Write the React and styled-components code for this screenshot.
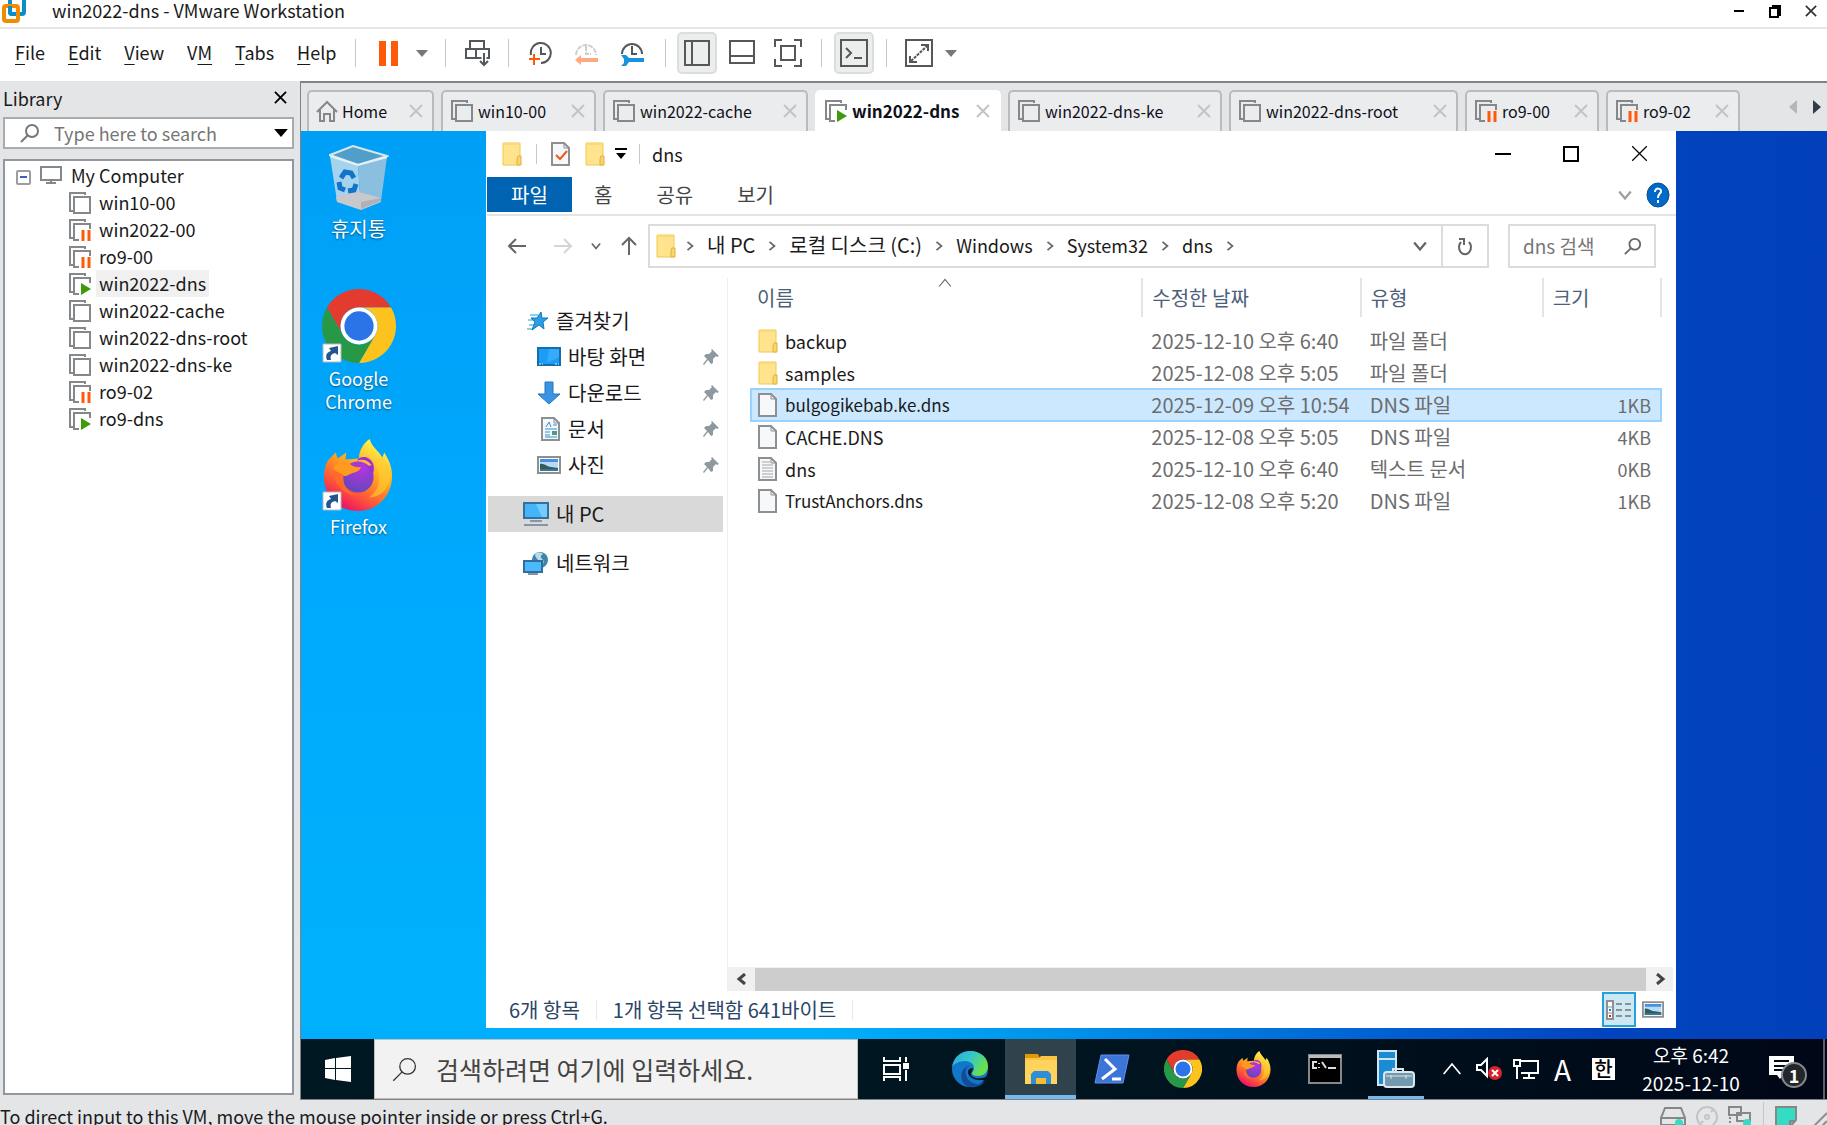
import React from "react";
import styled, { createGlobalStyle, css } from "styled-components";

const GlobalStyle = createGlobalStyle`
  * {
    box-sizing: border-box;
  }
  html, body {
    margin: 0;
    padding: 0;
  }
  body, button, input {
    font-family: "Noto Sans CJK KR", "Noto Sans", sans-serif;
    font-size: 18px;
    line-height: 24px;
    color: #1a1a1a;
  }
  button {
    border: 0;
    padding: 0;
    background: none;
  }
  input {
    border: 0;
    padding: 0;
    outline: none;
    background: none;
    min-width: 0;
  }
  svg {
    display: block;
    flex: none;
  }
  ul {
    list-style: none;
    margin: 0;
    padding: 0;
  }
`;

/* ---------- icons ---------- */

const VmwareLogo = () => (
  <svg width="26" height="24" viewBox="0 0 26 24" fill="none" strokeWidth="4">
    <rect x="10" y="-2" width="14" height="16" rx="2" stroke="#0b8fc9" />
    <rect x="4" y="6" width="14" height="15" rx="2" stroke="#f38b00" />
    <path d="M10 6v6a2 2 0 0 0 2 2h4" stroke="#0b8fc9" />
  </svg>
);

const VmIcon = ({ state }) => (
  <svg width="24" height="24" viewBox="0 0 24 24" fill="none" stroke="#85888b" strokeWidth="2">
    <path d="M17 4V2H2v18h3" />
    {!state && <rect x="6" y="6" width="16" height="16" />}
    {state && <path d="M11 22H6V6h16v5" />}
    {state === "paused" && (
      <path d="M15 12v11M21 12v11" stroke="#ff5a0a" strokeWidth="3" />
    )}
    {state === "running" && <path d="M13 11l10 6-10 6z" fill="#3d9a0b" stroke="none" />}
  </svg>
);

const HomeIcon = () => (
  <svg width="22" height="22" viewBox="0 0 22 22" fill="none" stroke="#85888b" strokeWidth="2">
    <path d="M1 12L11 2l10 10M4 10v11h4v-7h6v7h4V10" />
  </svg>
);

const Cross = ({ size = 14, color = "#c2c4c6", stroke = 2 }) => (
  <svg width={size} height={size} viewBox="0 0 14 14" stroke={color} strokeWidth={stroke}>
    <path d="M1 1l12 12M13 1L1 13" />
  </svg>
);

const Caret = ({ width = 12, height = 7, color = "#76797c" }) => (
  <svg width={width} height={height} viewBox="0 0 12 7" fill={color}>
    <path d="M0 0h12L6 7z" />
  </svg>
);

const Chevron = ({ turn = 0, size = 12, color = "#666", stroke = 2 }) => (
  <svg width={size} height={size} viewBox="0 0 12 12" fill="none" stroke={color} strokeWidth={stroke}>
    <path d="M1 3l5 6 5-6" transform={`rotate(${turn} 6 6)`} />
  </svg>
);

const Magnifier = ({ size = 20, color = "#777", stroke = 2 }) => (
  <svg width={size} height={size} viewBox="0 0 20 20" fill="none" stroke={color} strokeWidth={stroke}>
    <circle cx="12" cy="8" r="6" />
    <path d="M8 12l-7 7" />
  </svg>
);

const Monitor = () => (
  <svg width="22" height="20" viewBox="0 0 22 20" fill="none" stroke="#85888b" strokeWidth="2">
    <rect x="1" y="2" width="20" height="13" />
    <path d="M11 15v3M6 18h10" />
  </svg>
);

const SendKeysIcon = () => (
  <svg width="26" height="28" viewBox="0 0 26 28" fill="none" stroke="#55585a" strokeWidth="2">
    <rect x="6" y="2" width="14" height="8" />
    <path d="M2 10h23v9H2zM12 10v9" />
    <path d="M20 16v10M16 22l4 4 4-4" stroke="#fff" strokeWidth="5" />
    <path d="M20 14v12M16 22l4 4 4-4" />
  </svg>
);

const ClockIcon = ({ kind }) => (
  <svg width="24" height="26" viewBox="0 0 24 26" fill="none" stroke={kind === "revert" ? "#cfcfcf" : "#55585a"} strokeWidth="2">
    {kind === "take" && <path d="M3 15A10 10 0 1 1 13 23M13 7v7h5" />}
    {kind === "revert" && <path d="M2 15A10 10 0 1 1 22 15M12 6v8h5" strokeDasharray="5 1" />}
    {kind === "manage" && <path d="M2 14A10 10 0 1 1 22 14M12 6v8h5" />}
    {kind === "take" && <path d="M1 19h11M6 14v11" stroke="#ff5a0a" />}
    {kind === "revert" && <path d="M1 20l6-5v3h17v4H7v3z" fill="#ffa983" stroke="none" />}
    {kind === "manage" && (
      <path d="M1 15h5l3 3h15v4H9l-3 4H1l3-3v-4z" fill="#1793dd" stroke="none" />
    )}
  </svg>
);

const PanelIcon = ({ kind }) => (
  <svg width="28" height="28" viewBox="0 0 28 28" fill="none" stroke="#55585a" strokeWidth="2">
    {kind === "left" && <path d="M2 2h24v24H2zM9 2v24" />}
    {kind === "bottom" && <path d="M2 2h24v22H2zM2 17h24" />}
    {kind === "full" && <path d="M1 8V1h7M20 1h7v7M27 20v7h-7M8 27H1v-7M7 7h14v14H7z" />}
    {kind === "console" && <path d="M1 1h26v26H1zM6 9l5 5-5 5M14 19h8" />}
    {kind === "expand" && (
      <>
        <path d="M1 1h26v26H1zM16 6h7v6M5 17v6h7" />
        <path d="M6 22L22 7" strokeDasharray="3 1" />
      </>
    )}
  </svg>
);

const Folder = () => (
  <svg width="20" height="24" viewBox="0 0 20 24">
    <path d="M1 1h17v22H1z" fill="#ffe48d" stroke="#f0c850" />
    <path d="M1 1h17v2H1z" fill="#fbd976" />
    <path d="M16 14h3v9h-4v-6z" fill="#fbd56a" stroke="#dfb23e" />
  </svg>
);

const Page = ({ kind }) => (
  <svg width="20" height="24" viewBox="0 0 20 24" fill="none">
    <path d="M1 1h12l5 5v17H1z" fill="#f6f8f9" stroke="#8d9092" strokeWidth="2" />
    <path d="M13 1v5h5" stroke="#8d9092" />
    {kind === "check" && <path d="M5 13l4 4 7-8" stroke="#f0561d" strokeWidth="2" />}
    {kind === "text" && (
      <path d="M4 5h8M4 8h11M4 11h11M4 14h11M4 17h11M4 20h11" stroke="#a3a6a8" />
    )}
    {kind === "doc" && (
      <>
        <path d="M5 10l3-5 2 5M12 8h4M4 12h12M4 15h5M4 18h5M4 20h12" stroke="#2f8fd3" />
        <path d="M11 14h5v4h-5z" fill="#4b9b86" />
      </>
    )}
  </svg>
);

const Picture = ({ width = 24, height = 18 }) => (
  <svg width={width} height={height} viewBox="0 0 24 18">
    <rect x="1" y="1" width="22" height="16" fill="#fff" stroke="#8d9092" strokeWidth="2" />
    <path d="M3 3h18v12H3z" fill="#b4dcf8" />
    <path d="M3 3h18v3H3z" fill="#4a90dd" />
    <path d="M3 8c4-1 7 3 11 3l7 1v3H3z" fill="#2f5e57" />
    <path d="M3 13h18v2H3z" fill="#41719c" />
  </svg>
);

const StarIcon = () => (
  <svg width="22" height="20" viewBox="0 0 22 20">
    <path d="M3 4h8M1 9h6M2 14h6M0 18h6" stroke="#8fcdf3" strokeWidth="2" />
    <path d="M14 1l1 6h6l-5 4 1 7-5-4-7 5 3-8-4-4h6z" fill="#2a9fe3" stroke="#1577b8" />
  </svg>
);

const DesktopIcon = () => (
  <svg width="24" height="20" viewBox="0 0 24 20">
    <path d="M1 1h22v17H1z" fill="#1b9df5" stroke="#116fae" strokeWidth="2" />
    <path d="M12 2h10v8l-12 6z" fill="#35abf9" />
    <path d="M2 17h4M18 17h4" stroke="#d5edfb" strokeDasharray="2 1" />
  </svg>
);

const DownArrow = () => (
  <svg width="24" height="24" viewBox="0 0 24 24">
    <path d="M8 1h8v12h7L12 23 1 13h7z" fill="#3a94e4" stroke="#2473bb" />
  </svg>
);

const PcIcon = () => (
  <svg width="26" height="24" viewBox="0 0 26 24">
    <path d="M1 1h24v15H1z" fill="#45b5f9" stroke="#376f9b" strokeWidth="2" />
    <path d="M13 2h11v13h-5z" fill="#74cbff" />
    <path d="M7 19h12M1 23h24" stroke="#8296a8" strokeWidth="2" />
  </svg>
);

const NetworkIcon = () => (
  <svg width="26" height="24" viewBox="0 0 26 24">
    <circle cx="17" cy="9" r="8" fill="#3f85ab" />
    <path d="M12 3c2-2 6-2 8 0-2 1-3 3-1 5 2 1 2 3 1 5-3-2-8-6-8-10z" fill="#b5dde9" />
    <path d="M1 10h18v11H1z" fill="#4bb9fb" stroke="#2d6f9e" strokeWidth="2" />
    <path d="M5 23h10" stroke="#8296a8" strokeWidth="2" />
  </svg>
);

const Pin = () => (
  <svg width="16" height="16" viewBox="0 0 16 16" fill="#8e999f">
    <path d="M9 0l7 7-2 1-1-1-3 3 0 4-2 1-3-4-4 5-1-1 4-5-3-3 2-2h3l3-3-1-1z" />
  </svg>
);

const Arrow = ({ turn = 0, color = "#666" }) => (
  <svg width="20" height="20" viewBox="0 0 20 20" fill="none" stroke={color} strokeWidth="2">
    <path d="M19 10H2M9 3l-7 7 7 7" transform={`rotate(${turn} 10 10)`} />
  </svg>
);

const Refresh = () => (
  <svg width="16" height="20" viewBox="0 0 16 20" fill="none" stroke="#666" strokeWidth="2">
    <path d="M12 6a6 7 0 1 1-8 0M2 3h5v6" />
  </svg>
);

const Help = () => (
  <svg width="24" height="26" viewBox="0 0 24 26">
    <ellipse cx="12" cy="13" rx="11" ry="12" fill="#0068c9" stroke="#0a4f91" />
    <path d="M9 10c0-5 7-4 6 0-1 2-3 2-3 6M12 18v3" fill="none" stroke="#fff" strokeWidth="2" />
  </svg>
);

const RecycleBin = () => (
  <svg width="60" height="66" viewBox="0 0 60 66">
    <path d="M1 10L24 1l34 10-29 9z" fill="#4f9fc8" stroke="#d7e6ee" strokeWidth="2" />
    <path d="M1 11l28 9 3 44-24-8z" fill="#a4d3ee" />
    <path d="M58 12L29 20l3 44 20-8z" fill="#8abfe0" />
    <path d="M7 52l19-6 26 7v4l-20 8-24-8z" fill="#c8c9cc" />
    <path d="M32 64l20-8v-3l-20 4z" fill="#aeb2b8" />
    <path d="M1 11l28 9 29-8" fill="none" stroke="#e5f1f7" strokeWidth="2" />
    <g fill="none" stroke="#1173c9" strokeWidth="5">
      <path d="M12 33l4-6 6 1 3 5" />
      <path d="M10 37l1 6 5 2" />
      <path d="M19 46l6-1 2-6" />
    </g>
  </svg>
);

const Chrome = ({ size }) => (
  <svg width={size} height={size} viewBox="0 0 48 48">
    <path d="M24 12H44.800A24 24 0 0 0 3.200 12L13.600 30A12 12 0 0 1 24 12z" fill="#e33b2e" />
    <path d="M24 12H44.800A24 24 0 0 1 24 48L34.400 30A12 12 0 0 0 24 12z" fill="#fcc31e" />
    <path d="M3.200 12A24 24 0 0 0 24 48L34.400 30A12 12 0 0 1 13.600 30z" fill="#279847" />
    <circle cx="24" cy="24" r="12" fill="#fff" />
    <circle cx="24" cy="24" r="9.500" fill="#2b74e8" />
  </svg>
);

const Firefox = ({ size }) => (
  <svg width={size} height={size} viewBox="0 0 72 74">
    <defs>
      <linearGradient id="fxBody" x1="0.800" y1="0.100" x2="0.300" y2="1">
        <stop offset="0" stopColor="#fff04a" />
        <stop offset="0.400" stopColor="#ffa31f" />
        <stop offset="0.700" stopColor="#ff5a36" />
        <stop offset="1" stopColor="#ea0b6c" />
      </linearGradient>
      <radialGradient id="fxGlobe" cx="0.600" cy="0.200" r="0.900">
        <stop offset="0" stopColor="#b833e1" />
        <stop offset="1" stopColor="#5a49b8" />
      </radialGradient>
    </defs>
    <path d="M4 22l8-8 2 6 9-6-1 7 14-1c0-9 5-16 11-20 2 8 9 12 13 19l2-5c5 8 8 15 8 24 0 20-15 36-35 36S0 59 0 39c0-6 1-12 4-17z" fill="url(#fxBody)" />
    <path d="M50 24c10 10 9 29-4 36 14 0 22-11 22-23 0-9-5-15-10-20 2 6-1 9-8 7z" fill="#ffcf33" opacity="0.600" />
    <circle cx="35" cy="39" r="16" fill="url(#fxGlobe)" />
    <path d="M34 22c6-2 12 0 15 5l-5 1c3 2 5 5 6 9 3-8 1-15-6-18-4-1-8 0-10 3z" fill="#9a2fd8" />
    <path d="M9 31c4-7 10-10 16-8 3 5 7 6 13 6-2 6-9 5-15 9-6 0-10-3-14-7z" fill="#ff9a20" />
    <path d="M9 31c1 16 11 26 25 27-10-3-15-10-14-21z" fill="#ff6a2c" />
  </svg>
);

const Shortcut = () => (
  <svg width="20" height="20" viewBox="0 0 20 20">
    <path d="M1 1h18v18H1z" fill="#fff" stroke="#b7b9bb" />
    <path d="M5 17c-2-5 0-8 4-9L7 5l9-2v9l-3-2c-4 1-5 3-4 7z" fill="#24558f" />
  </svg>
);

const WindowsLogo = () => (
  <svg width="26" height="26" viewBox="0 0 26 26" fill="#fff">
    <path d="M0 4l10-2v10H0zM11 2l15-2v12H11zM0 13h10v11L0 22zM11 13h15v13l-15-2z" />
  </svg>
);

const TaskView = () => (
  <svg width="26" height="24" viewBox="0 0 26 24" fill="none" stroke="#fff" strokeWidth="2">
    <path d="M1 0v4h16V0M1 8h16v9H1zM1 24v-4h16v4M23 0v5M23 13v11" />
    <path d="M21 7h4v4h-4z" fill="#fff" />
  </svg>
);

const Edge = () => (
  <svg width="38" height="38" viewBox="0 0 38 38">
    <defs>
      <linearGradient id="edgeTop" x1="0" y1="0" x2="1" y2="0.500">
        <stop offset="0" stopColor="#27a8ec" />
        <stop offset="0.500" stopColor="#35c6c9" />
        <stop offset="1" stopColor="#6be04b" />
      </linearGradient>
    </defs>
    <circle cx="19" cy="19" r="18" fill="#1277cb" />
    <path d="M1 17C3 6 11 1 19 1c11 0 18 7 18 15 0 7-5 10-10 10-4 0-6-1-6-3 0-1 2-2 2-5 0-4-4-7-9-7-6 0-11 3-13 6z" fill="url(#edgeTop)" />
    <path d="M15 19c-2 8 4 15 12 15 3 0 6-2 8-4-4 6-10 8-17 7-7-2-9-10-7-15 1-3 4-6 8-6-2 1-4 2-4 3z" fill="#124c94" />
    <path d="M22 18c0 3-2 4-2 6 0 3 5 5 10 4 3 0 5-1 7-3l1 6-7-1c-7 1-14-3-14-8 0-3 3-4 5-4z" fill="#001620" />
  </svg>
);

const ExplorerIcon = () => (
  <svg width="34" height="32" viewBox="0 0 34 32">
    <path d="M1 1h13l2 4H1z" fill="#e09a08" />
    <path d="M1 5h32v26H1z" fill="#ffd35e" />
    <path d="M1 5h14l2-2h16v4H1z" fill="#fbc542" />
    <path d="M7 31V21l3-3h14l3 3v10h-5v-6H12v6z" fill="#2e8fd6" />
    <path d="M12 25h10v6H12z" fill="#f5bc36" />
  </svg>
);

const PowerShell = () => (
  <svg width="36" height="30" viewBox="0 0 36 30">
    <path d="M7 1h28l-6 28H1z" fill="#3d74d8" stroke="#5d90ea" />
    <path d="M11 5l10 10L8 25M18 25h9" fill="none" stroke="#fff" strokeWidth="3" />
  </svg>
);

const CmdIcon = () => (
  <svg width="34" height="30" viewBox="0 0 34 30">
    <path d="M1 1h32v28H1z" fill="#000" stroke="#85898c" strokeWidth="2" />
    <path d="M1 1h32v3H1z" fill="#b9bdc0" />
    <path d="M9 8H5v6h4M11 9v1M11 13v1M14 8l4 6M20 14h8" fill="none" stroke="#ddd" strokeWidth="2" />
  </svg>
);

const ServerManager = () => (
  <svg width="38" height="38" viewBox="0 0 38 38">
    <path d="M1 1h18v34H1z" fill="#1b8bd4" stroke="#cfe6f5" strokeWidth="2" />
    <path d="M2 9h16" stroke="#cfe6f5" strokeWidth="2" />
    <path d="M16 21v-2h10v2" fill="none" stroke="#dbe7ee" strokeWidth="2" />
    <rect x="7" y="22" width="30" height="15" rx="3" fill="#7299ad" stroke="#dbe7ee" strokeWidth="2" />
    <path d="M9 26h26M14 25v4M29 25v4" stroke="#dbe7ee" strokeWidth="1" />
  </svg>
);

const Speaker = () => (
  <svg width="26" height="24" viewBox="0 0 26 24" fill="none" stroke="#fff" strokeWidth="2">
    <path d="M1 8h4l6-6v17l-6-6H1z" />
    <circle cx="19" cy="16" r="7" fill="#d8232c" stroke="none" />
    <path d="M16 13l6 6M22 13l-6 6" />
  </svg>
);

const WiredIcon = () => (
  <svg width="26" height="22" viewBox="0 0 26 22" fill="none" stroke="#fff" strokeWidth="2">
    <path d="M8 3h17v12H8M16 15v5M10 20h12M1 2h6v6H1zM4 8v13" />
  </svg>
);

const Notification = () => (
  <svg width="26" height="26" viewBox="0 0 26 26">
    <path d="M0 0h25v19H14l-3 4-3-4H0z" fill="#fff" />
    <path d="M5 5h15M5 10h15M5 14h12" stroke="#000c18" strokeWidth="2" />
  </svg>
);

const DiskIcon = () => (
  <svg width="26" height="22" viewBox="0 0 26 22" fill="none" stroke="#85888b" strokeWidth="2">
    <path d="M1 20v-7L5 3h16l4 10v7zM1 13h24" />
    <circle cx="19" cy="18" r="4" fill="#35dcc4" stroke="none" />
  </svg>
);

const DiscIcon = () => (
  <svg width="22" height="22" viewBox="0 0 22 22" fill="none" stroke="#c2c5c7" strokeWidth="2">
    <circle cx="11" cy="12" r="10" />
    <circle cx="11" cy="12" r="2" />
    <path d="M15 7l2-2M5 18l2-2" />
  </svg>
);

const AdapterIcon = () => (
  <svg width="24" height="22" viewBox="0 0 24 22" fill="none" stroke="#85888b" strokeWidth="2">
    <path d="M1 2h12v8H1zM9 8h13v8H9z" fill="#e4e5e7" />
    <path d="M2 12v10" strokeDasharray="2 2" />
    <circle cx="19" cy="18" r="4" fill="#35dcc4" stroke="none" />
  </svg>
);

const NoteIcon = () => (
  <svg width="22" height="22" viewBox="0 0 22 22">
    <path d="M1 2h20v13l-6 7H1z" fill="#35dcc4" stroke="#85888b" strokeWidth="2" />
    <path d="M15 22v-6h6" fill="none" stroke="#85888b" strokeWidth="2" />
  </svg>
);

/* ---------- VMware frame ---------- */

const Frame = styled.div`
  display: flex;
  flex-direction: column;
  height: 100vh;
  overflow: hidden;
  background: #e4e5e7;
`;

const TitleBar = styled.header`
  display: flex;
  align-items: flex-start;
  gap: 26px;
  height: 29px;
  background: #fff;
  border-bottom: 2px solid #e6e6e6;
  white-space: nowrap;
`;

const TitleText = styled.span`
  flex: 1;
  line-height: 20px;
`;

const TitleButtons = styled.div`
  display: flex;
  align-items: center;
  gap: 24px;
  height: 22px;
  padding-right: 10px;
`;

const MenuBar = styled.nav`
  display: flex;
  align-items: center;
  height: 52px;
  padding: 0 0 4px 15px;
  background: #fff;
`;

const Menus = styled.div`
  display: flex;
  gap: 23px;
  padding: 0 15px 2px 0;
`;

const MenuButton = styled.button`
  white-space: nowrap;

  u {
    text-underline-offset: 4px;
  }
`;

const Separator = styled.span`
  width: 1px;
  height: ${(p) => p.$height || 28}px;
  margin: 0 ${(p) => p.$gap || 12}px;
  background: ${(p) => (p.$light ? "#e8e8e8" : "#c4c6c8")};
  flex: none;
`;

const Spacer = styled.span`
  width: ${(p) => p.$width}px;
  flex: none;
`;

const ToolButton = styled.button`
  display: flex;
  align-items: center;
  justify-content: center;
  width: ${(p) => p.$width || 46}px;
  height: 42px;
  border-radius: 5px;
  ${(p) =>
    p.$pressed &&
    css`
      background: #eceded;
      border: 2px solid #dcdddf;
    `}
`;

const PauseGlyph = styled.span`
  width: 19px;
  height: 25px;
  border: solid #ff5a0a;
  border-width: 0 7px;
`;

const Workspace = styled.div`
  display: flex;
  flex: 1;
  min-height: 0;
`;

const Library = styled.aside`
  display: flex;
  flex-direction: column;
  width: 300px;
  padding: 0 6px 5px 3px;
  flex: none;
`;

const LibraryHead = styled.div`
  display: flex;
  align-items: center;
  justify-content: space-between;
  height: 36px;
  padding: 0 7px 3px 0;
`;

const LibrarySearch = styled.label`
  display: flex;
  align-items: center;
  gap: 14px;
  height: 32px;
  padding: 0 4px 0 15px;
  background: #fff;
  border: 2px solid #a9acaf;

  input {
    flex: 1;
  }
  input::placeholder {
    color: #767676;
    opacity: 1;
  }
`;

const Tree = styled.div`
  flex: 1;
  margin-top: 10px;
  padding-left: 11px;
  background: #fff;
  border: 2px solid #9097a0;
`;

const TreeRoot = styled.div`
  display: flex;
  align-items: center;
  height: 28px;
  gap: 9px;
`;

const Expander = styled.button`
  width: 15px;
  height: 15px;
  border: 2px solid #9b9da0;
  border-radius: 2px;
  display: flex;
  align-items: center;
  justify-content: center;
  margin-top: 4px;

  &::before {
    content: "";
    width: 7px;
    height: 2px;
    background: #3f5ec2;
  }
`;

const TreeItem = styled.li`
  display: flex;
  align-items: center;
  gap: 4px;
  height: 27px;
  padding-left: 52px;
`;

const TreeLabel = styled.span`
  line-height: 27px;
  padding: 0 3px;
  background: ${(p) => (p.$active ? "#f0f0f0" : "transparent")};
`;

const Stage = styled.main`
  display: flex;
  flex-direction: column;
  flex: 1;
  min-width: 0;
  border: solid #808285;
  border-width: 2px 0 1px 1px;
`;

const TabStrip = styled.div`
  display: flex;
  align-items: flex-end;
  gap: 7px;
  height: 48px;
  padding: 0 6px;
  flex: none;
`;

const Tab = styled.button`
  display: flex;
  align-items: center;
  gap: 4px;
  width: ${(p) => p.$width}px;
  height: 41px;
  padding: 0 9px 2px 7px;
  background: ${(p) => (p.$active ? "#fff" : "#ebecee")};
  border: 2px solid ${(p) => (p.$active ? "#fff" : "#b9bbbe")};
  border-bottom: 0;
  border-radius: 5px 5px 0 0;
  white-space: nowrap;

  span {
    flex: 1;
    text-align: left;
    font-size: ${(p) => (p.$active ? 17 : 16)}px;
    font-weight: ${(p) => (p.$active ? 700 : 400)};
    color: #10101a;
  }
`;

const TabArrows = styled.div`
  display: flex;
  gap: 16px;
  align-items: center;
  align-self: stretch;
  margin-left: auto;
`;

const StatusBar = styled.footer`
  display: flex;
  align-items: center;
  justify-content: space-between;
  height: 25px;
  padding-top: 7px;
  overflow: hidden;
  white-space: nowrap;
`;

const StatusIcons = styled.div`
  display: flex;
  align-items: center;
  gap: 10px;
`;

/* ---------- guest desktop ---------- */

const Desktop = styled.div`
  display: flex;
  flex: 1;
  min-height: 0;
  padding: 0 151px 11px 0;
  background: linear-gradient(90deg, #00aeff 0%, #00b0fb 34%, #0092ea 50%, #0063d3 70%, #0244bf 85%, #0140ba 100%);
`;

const DesktopIcons = styled.div`
  display: flex;
  flex-direction: column;
  width: 185px;
  padding: 14px 70px 0 0;
  flex: none;
  background: linear-gradient(180deg, #009ff6 0%, #00a9fd 50%, #00b2fb 100%);
`;

const DesktopItem = styled.button`
  display: flex;
  flex-direction: column;
  align-items: center;
  gap: ${(p) => p.$gap || 4}px;
  margin-bottom: ${(p) => p.$after || 0}px;
  color: #fff;
  font-size: ${(p) => p.$size || 18}px;
  line-height: 23px;
  text-shadow: 0 1px 2px rgba(0, 0, 0, 0.5);
`;

const Art = styled.span`
  position: relative;
  width: 74px;
  display: flex;
  justify-content: center;
`;

const Badge = styled.span`
  position: absolute;
  left: 0;
  bottom: 0;
`;

const Explorer = styled.section`
  display: flex;
  flex-direction: column;
  flex: 1;
  min-width: 0;
  padding-left: 1px;
  background: #fff;
`;

const Caption = styled.div`
  display: flex;
  align-items: center;
  height: 47px;
  padding: 0 28px 2px 15px;
`;

const CaptionButtons = styled.div`
  display: flex;
  align-items: center;
  gap: ${(p) => p.$gap}px;
  margin-left: auto;
`;

const Ribbon = styled.div`
  display: flex;
  align-items: center;
  height: 38px;
  padding: 0 6px 3px 0;
  border-bottom: 2px solid #e3e4e6;
`;

const RibbonTab = styled.button`
  height: 35px;
  padding: 0 22px;
  font-size: 20px;
  color: ${(p) => (p.$file ? "#fff" : "#444")};
  background: ${(p) => (p.$file ? "#0063b1" : "transparent")};
  width: ${(p) => (p.$file ? "85px" : "auto")};
`;

const AddressRow = styled.div`
  display: flex;
  align-items: center;
  height: 62px;
  padding: 0 20px 2px;
`;

const NavButtons = styled.div`
  display: flex;
  align-items: center;
  gap: 18px;
  width: 141px;

  button:nth-child(1) {
    margin-right: 8px;
  }
`;

const PathBox = styled.div`
  display: flex;
  align-items: center;
  flex: 1;
  min-width: 0;
  height: 44px;
  padding-left: 6px;
  border: 2px solid #dcdcdc;
`;

const Crumb = styled.button`
  margin: 0 12px;
  padding-bottom: 2px;
  font-size: ${(p) => (p.$hangul ? 20 : 18)}px;
  white-space: nowrap;
`;

const PathEnd = styled.div`
  display: flex;
  align-items: center;
  align-self: stretch;
  margin-left: auto;
`;

const RefreshButton = styled.button`
  display: flex;
  align-items: center;
  justify-content: center;
  align-self: stretch;
  width: 46px;
  margin-left: 14px;
  border-left: 2px solid #dcdcdc;
`;

const FileSearch = styled.label`
  display: flex;
  align-items: center;
  width: 148px;
  height: 44px;
  margin-left: 19px;
  padding: 0 12px 0 13px;
  border: 2px solid #dcdcdc;

  input {
    flex: 1;
    font-size: 19px;
  }
  input::placeholder {
    color: #767676;
    opacity: 1;
  }
`;

const Panes = styled.div`
  display: flex;
  flex: 1;
  min-height: 0;
`;

const Sidebar = styled.ul`
  display: flex;
  flex-direction: column;
  width: 241px;
  padding: 25px 4px 0 1px;
  border-right: 1px solid #eeeeee;
`;

const SideItem = styled.li`
  display: flex;
  align-items: center;
  gap: 7px;
  height: 36px;
  padding: 0 4px 0 ${(p) => (p.$nested ? 47 : 35)}px;
  margin-top: ${(p) => (p.$apart ? 13 : 0)}px;
  font-size: 20px;
  background: ${(p) => (p.$active ? "#d9d9d9" : "transparent")};

  svg:last-child {
    margin-left: auto;
  }
`;

const SideIcon = styled.span`
  display: flex;
  justify-content: center;
  width: 26px;
`;

const Listing = styled.div`
  display: flex;
  flex-direction: column;
  flex: 1;
  min-width: 0;
  padding-right: 3px;
`;

const ListingBody = styled.div`
  flex: 1;
  padding: 0 11px 0 23px;
`;

const FileTable = styled.table`
  width: 100%;
  table-layout: fixed;
  border-collapse: collapse;
  color: #6d6d6d;
  font-size: 20px;
`;

const HeadCell = styled.th`
  position: relative;
  width: ${(p) => p.$width};
  height: 39px;
  padding: 0 0 0 ${(p) => (p.$first ? 6 : 9)}px;
  border-right: 2px solid #e5e5e5;
  text-align: left;
  font-weight: 400;
  color: #4c607a;
`;

const SortMark = styled.span`
  position: absolute;
  left: 48%;
  top: -2px;
`;

const SpacerRow = styled.tr`
  height: 8px;
`;

const FileRow = styled.tr`
  height: 32px;
  ${(p) =>
    p.$selected &&
    css`
      background: #cce8ff;
      outline: 2px solid #99d1ff;
      outline-offset: -1px;
    `}

  td {
    padding: 0 0 0 9px;
    white-space: nowrap;
  }
  td:first-child {
    padding-left: 7px;
  }
  td:last-child {
    padding-right: 10px;
    text-align: right;
    font-size: 18px;
  }
`;

const FileName = styled.div`
  display: flex;
  align-items: center;
  gap: 7px;
  font-size: ${(p) => (p.$long ? 17 : 18)}px;
  color: #1a1a1a;
`;

const ScrollTrack = styled.div`
  display: flex;
  align-items: center;
  height: 24px;
  background: #f0f0f0;
`;

const ScrollButton = styled.button`
  display: flex;
  align-items: center;
  justify-content: center;
  width: 27px;
`;

const ScrollThumb = styled.div`
  flex: 1;
  height: 23px;
  background: #cdcdcd;
`;

const ItemCount = styled.div`
  display: flex;
  align-items: center;
  height: 37px;
  padding: 0 12px 0 22px;
  font-size: 20px;
  color: #2a4568;
`;

const ViewButtons = styled.div`
  display: flex;
  align-items: center;
  gap: 6px;
  margin-left: auto;
`;

const ViewButton = styled.button`
  display: flex;
  align-items: center;
  justify-content: center;
  height: 35px;
  width: ${(p) => (p.$active ? 34 : 22)}px;
  background: ${(p) => (p.$active ? "#cce8f5" : "transparent")};
  border: ${(p) => (p.$active ? "2px solid #26a0da" : 0)};
`;

const Taskbar = styled.div`
  display: flex;
  align-items: center;
  height: 60px;
  flex: none;
  background: linear-gradient(90deg, #001822 0%, #001520 50%, #000716 100%);
  color: #fff;
`;

const StartButton = styled.button`
  display: flex;
  align-items: center;
  justify-content: center;
  width: 73px;
  height: 60px;
  flex: none;
`;

const TaskSearch = styled.label`
  display: flex;
  align-items: center;
  gap: 18px;
  width: 484px;
  height: 60px;
  flex: none;
  padding-left: 17px;
  background: #f2f2f2;
  border: 1px solid #bfbfbf;

  input {
    flex: 1;
    font-size: 25px;
    line-height: 36px;
  }
  input::placeholder {
    color: #444;
    opacity: 1;
  }
`;

const TaskButton = styled.button`
  display: flex;
  align-items: center;
  justify-content: center;
  width: ${(p) => p.$width || 71}px;
  height: 60px;
  flex: none;
  background: ${(p) => (p.$active ? "#30424c" : "transparent")};
  box-shadow: ${(p) => (p.$active ? "inset 0 -4px #76b9ed" : "none")};
`;

const RunningMark = styled.span`
  display: flex;
  align-items: center;
  justify-content: center;
  width: 56px;
  height: 60px;
  border-bottom: 3px solid #76b9ed;
  padding-top: 3px;
`;

const Tray = styled.div`
  display: flex;
  align-items: center;
  margin-left: auto;
  padding-right: 2px;
  height: 60px;
`;

const TrayItem = styled.button`
  display: flex;
  align-items: center;
  justify-content: center;
  width: 37px;
  color: #fff;
  font-size: 28px;
`;

const ImeBadge = styled.button`
  width: 23px;
  height: 22px;
  margin-left: 11px;
  background: #fff;
  color: #000;
  font-size: 20px;
  font-weight: 500;
  line-height: 20px;
`;

const Clock = styled.div`
  width: 100px;
  margin: 0 28px 0 26px;
  font-size: 19px;
  line-height: 28px;
  text-align: center;
  white-space: nowrap;
`;

const NoticeButton = styled.button`
  position: relative;
  width: 38px;
  height: 38px;
  margin-right: 16px;
`;

const NoticeCount = styled.span`
  position: absolute;
  right: 0;
  bottom: 0;
  width: 26px;
  height: 26px;
  border: 2px solid #85898c;
  border-radius: 50%;
  background: #23272b;
  color: #fff;
  font-size: 18px;
  font-weight: 700;
  line-height: 22px;
`;

const ShowDesktop = styled.button`
  width: 2px;
  height: 60px;
  background: #596068;
`;

/* ---------- data ---------- */

const menus = ["File", "Edit", "View", "VM", "Tabs", "Help"];

const machines = [
  { name: "win10-00" },
  { name: "win2022-00", state: "paused" },
  { name: "ro9-00", state: "paused" },
  { name: "win2022-dns", state: "running" },
  { name: "win2022-cache" },
  { name: "win2022-dns-root" },
  { name: "win2022-dns-ke" },
  { name: "ro9-02", state: "paused" },
  { name: "ro9-dns", state: "running" },
];

const tabs = [
  { name: "Home", width: 127, home: true },
  { name: "win10-00", width: 155 },
  { name: "win2022-cache", width: 205 },
  { name: "win2022-dns", width: 186, state: "running", active: true },
  { name: "win2022-dns-ke", width: 214 },
  { name: "win2022-dns-root", width: 229 },
  { name: "ro9-00", width: 134, state: "paused" },
  { name: "ro9-02", width: 134, state: "paused" },
];

const crumbs = [
  { name: "내 PC", hangul: true },
  { name: "로컬 디스크 (C:)", hangul: true },
  { name: "Windows" },
  { name: "System32" },
  { name: "dns" },
];

const places = [
  { name: "즐겨찾기", icon: <StarIcon /> },
  { name: "바탕 화면", icon: <DesktopIcon />, nested: true },
  { name: "다운로드", icon: <DownArrow />, nested: true },
  { name: "문서", icon: <Page kind="doc" />, nested: true },
  { name: "사진", icon: <Picture />, nested: true },
  { name: "내 PC", icon: <PcIcon />, active: true, apart: true },
  { name: "네트워크", icon: <NetworkIcon />, apart: true },
];

const files = [
  { name: "backup", date: "2025-12-10 오후 6:40", type: "파일 폴더", icon: <Folder /> },
  { name: "samples", date: "2025-12-08 오후 5:05", type: "파일 폴더", icon: <Folder /> },
  { name: "bulgogikebab.ke.dns", date: "2025-12-09 오후 10:54", type: "DNS 파일", size: "1KB", icon: <Page />, selected: true },
  { name: "CACHE.DNS", date: "2025-12-08 오후 5:05", type: "DNS 파일", size: "4KB", icon: <Page /> },
  { name: "dns", date: "2025-12-10 오후 6:40", type: "텍스트 문서", size: "0KB", icon: <Page kind="text" /> },
  { name: "TrustAnchors.dns", date: "2025-12-08 오후 5:20", type: "DNS 파일", size: "1KB", icon: <Page /> },
];

/* ---------- parts ---------- */

const TopBars = () => (
  <>
    <TitleBar>
      <VmwareLogo />
      <TitleText>win2022-dns - VMware Workstation</TitleText>
      <TitleButtons>
        <button aria-label="Minimize">
          <svg width="12" height="12" viewBox="0 0 12 12"><path d="M1 6h10" stroke="#000" strokeWidth="2" /></svg>
        </button>
        <button aria-label="Restore">
          <svg width="12" height="13" viewBox="0 0 12 13" fill="none" stroke="#000" strokeWidth="2">
            <path d="M1 3h8v9H1zM3 1h8v10" />
          </svg>
        </button>
        <button aria-label="Close"><Cross size={12} color="#333" /></button>
      </TitleButtons>
    </TitleBar>
    <MenuBar>
      <Menus>
        {menus.map((menu) => (
          <MenuButton key={menu}>
            {menu === "VM" ? <>V<u>M</u></> : <><u>{menu[0]}</u>{menu.slice(1)}</>}
          </MenuButton>
        ))}
      </Menus>
      <Separator $gap={4} />
      <ToolButton $width={56} aria-label="Pause"><PauseGlyph /></ToolButton>
      <ToolButton $width={12} aria-label="Power options"><Caret /></ToolButton>
      <Separator $gap={17} />
      <ToolButton $width={28} aria-label="Send keys"><SendKeysIcon /></ToolButton>
      <Separator $gap={17} />
      <ToolButton $width={28} aria-label="Take snapshot"><ClockIcon kind="take" /></ToolButton>
      <Spacer $width={18} />
      <ToolButton $width={28} aria-label="Revert snapshot"><ClockIcon kind="revert" /></ToolButton>
      <ToolButton $width={64} aria-label="Manage snapshots"><ClockIcon kind="manage" /></ToolButton>
      <Separator $gap={1} />
      <Spacer $width={10} />
      <ToolButton $width={40} $pressed aria-label="Library"><PanelIcon kind="left" /></ToolButton>
      <ToolButton $width={50} aria-label="Thumbnails"><PanelIcon kind="bottom" /></ToolButton>
      <ToolButton $width={42} aria-label="Full screen"><PanelIcon kind="full" /></ToolButton>
      <Separator $gap={12} />
      <ToolButton $width={40} $pressed aria-label="Console"><PanelIcon kind="console" /></ToolButton>
      <Separator $gap={12} />
      <ToolButton $width={40} aria-label="Stretch"><PanelIcon kind="expand" /></ToolButton>
      <ToolButton $width={24} aria-label="Stretch options"><Caret /></ToolButton>
    </MenuBar>
  </>
);

const LibraryPanel = () => (
  <Library>
    <LibraryHead>
      Library
      <button aria-label="Close library"><Cross size={13} color="#000" /></button>
    </LibraryHead>
    <LibrarySearch>
      <Magnifier />
      <input placeholder="Type here to search" aria-label="Type here to search" />
      <Caret width={14} height={8} color="#000" />
    </LibrarySearch>
    <Tree>
      <TreeRoot>
        <Expander aria-label="Collapse" />
        <Monitor />
        My Computer
      </TreeRoot>
      <ul>
        {machines.map(({ name, state }) => (
          <TreeItem key={name}>
            <VmIcon state={state} />
            <TreeLabel $active={name === "win2022-dns"}>{name}</TreeLabel>
          </TreeItem>
        ))}
      </ul>
    </Tree>
  </Library>
);

const ExplorerWindow = () => (
  <Explorer>
    <Caption>
      <Folder />
      <Separator $height={20} $gap={14} />
      <Page kind="check" />
      <Spacer $width={14} />
      <Folder />
      <Spacer $width={10} />
      <svg width="12" height="12" viewBox="0 0 12 12"><path d="M0 0h12v2H0zM1 5h10l-5 6z" /></svg>
      <Separator $height={20} $gap={12} />
      dns
      <CaptionButtons $gap={52}>
        <button aria-label="Minimize">
          <svg width="16" height="16" viewBox="0 0 16 16"><path d="M0 8h16" stroke="#000" strokeWidth="2" /></svg>
        </button>
        <button aria-label="Maximize">
          <svg width="16" height="16" viewBox="0 0 16 16"><path d="M1 1h14v14H1z" fill="none" stroke="#000" strokeWidth="2" /></svg>
        </button>
        <button aria-label="Close"><Cross size={17} color="#000" stroke={1} /></button>
      </CaptionButtons>
    </Caption>
    <Ribbon>
      <RibbonTab $file>파일</RibbonTab>
      <RibbonTab>홈</RibbonTab>
      <RibbonTab>공유</RibbonTab>
      <RibbonTab>보기</RibbonTab>
      <CaptionButtons $gap={14}>
        <Chevron color="#a0a0a0" size={14} />
        <Help />
      </CaptionButtons>
    </Ribbon>
    <AddressRow>
      <NavButtons>
        <button aria-label="Back"><Arrow /></button>
        <button aria-label="Forward"><Arrow turn={180} color="#d5d5d5" /></button>
        <button aria-label="Recent"><Chevron size={10} /></button>
        <button aria-label="Up"><Arrow turn={90} /></button>
      </NavButtons>
      <PathBox>
        <Folder />
        <Spacer $width={9} />
        <Chevron turn={-90} size={10} />
        {crumbs.map(({ name, hangul }) => (
          <React.Fragment key={name}>
            <Crumb $hangul={hangul}>{name}</Crumb>
            <Chevron turn={-90} size={10} />
          </React.Fragment>
        ))}
        <PathEnd>
          <Chevron size={14} />
          <RefreshButton aria-label="Refresh"><Refresh /></RefreshButton>
        </PathEnd>
      </PathBox>
      <FileSearch>
        <input placeholder="dns 검색" aria-label="dns 검색" />
        <Magnifier size={18} color="#666" />
      </FileSearch>
    </AddressRow>
    <Panes>
      <Sidebar>
        {places.map(({ name, icon, nested, active, apart }) => (
          <SideItem key={name} $nested={nested} $active={active} $apart={apart}>
            <SideIcon>{icon}</SideIcon>
            {name}
            {nested && <Pin />}
          </SideItem>
        ))}
      </Sidebar>
      <Listing>
        <ListingBody>
          <FileTable>
            <thead>
              <tr>
                <HeadCell $first $width="auto">이름<SortMark><Chevron turn={180} stroke={1} size={14} /></SortMark></HeadCell>
                <HeadCell $width="24%">수정한 날짜</HeadCell>
                <HeadCell $width="20%">유형</HeadCell>
                <HeadCell $width="13%">크기</HeadCell>
              </tr>
            </thead>
            <tbody>
              <SpacerRow />
              {files.map((file) => (
                <FileRow key={file.name} $selected={file.selected}>
                  <td><FileName $long={file.name.length > 12}>{file.icon}{file.name}</FileName></td>
                  <td>{file.date}</td>
                  <td>{file.type}</td>
                  <td>{file.size}</td>
                </FileRow>
              ))}
            </tbody>
          </FileTable>
        </ListingBody>
        <ScrollTrack>
          <ScrollButton aria-label="Scroll left"><Chevron turn={90} color="#444" stroke={3} /></ScrollButton>
          <ScrollThumb />
          <ScrollButton aria-label="Scroll right"><Chevron turn={-90} color="#444" stroke={3} /></ScrollButton>
        </ScrollTrack>
      </Listing>
    </Panes>
    <ItemCount>
      6개 항목
      <Separator $height={20} $gap={16} $light />
      1개 항목 선택함 641바이트
      <Separator $height={20} $gap={16} $light />
      <ViewButtons>
        <ViewButton $active aria-label="Details">
          <svg width="26" height="20" viewBox="0 0 26 20" fill="none" stroke="#8d9092" strokeWidth="2">
            <path d="M1 1h6v18H1z" fill="#fff" />
            <path d="M1 7h6M1 13h6" strokeWidth="1" />
            <path d="M10 4h6M19 4h6M10 10h6M19 10h6M10 16h6M19 16h6" />
            <path d="M3 16h2" stroke="#e02020" />
            <path d="M3 10h2" stroke="#2f7fd0" />
          </svg>
        </ViewButton>
        <ViewButton aria-label="Large icons"><Picture width={22} height={17} /></ViewButton>
      </ViewButtons>
    </ItemCount>
  </Explorer>
);

const GuestTaskbar = () => (
  <Taskbar>
    <StartButton aria-label="Start"><WindowsLogo /></StartButton>
    <TaskSearch>
      <Magnifier size={26} color="#333" stroke={1} />
      <input placeholder="검색하려면 여기에 입력하세요." aria-label="검색" />
    </TaskSearch>
    <TaskButton $width={76} aria-label="Task view"><TaskView /></TaskButton>
    <TaskButton aria-label="Edge"><Edge /></TaskButton>
    <TaskButton $active aria-label="Explorer"><ExplorerIcon /></TaskButton>
    <TaskButton aria-label="PowerShell"><PowerShell /></TaskButton>
    <TaskButton aria-label="Chrome"><Chrome size={38} /></TaskButton>
    <TaskButton aria-label="Firefox"><Firefox size={36} /></TaskButton>
    <TaskButton aria-label="Command prompt"><CmdIcon /></TaskButton>
    <TaskButton aria-label="Server manager"><RunningMark><ServerManager /></RunningMark></TaskButton>
    <Tray>
      <TrayItem aria-label="Hidden icons"><Chevron turn={180} size={20} color="#fff" stroke={1} /></TrayItem>
      <TrayItem aria-label="Volume"><Speaker /></TrayItem>
      <TrayItem aria-label="Network"><WiredIcon /></TrayItem>
      <TrayItem>A</TrayItem>
      <ImeBadge>한</ImeBadge>
      <Clock>오후 6:42<br />2025-12-10</Clock>
      <NoticeButton aria-label="Notifications">
        <Notification />
        <NoticeCount>1</NoticeCount>
      </NoticeButton>
      <ShowDesktop aria-label="Show desktop" />
    </Tray>
  </Taskbar>
);

const App = () => (
  <Frame>
    <GlobalStyle />
    <TopBars />
    <Workspace>
      <LibraryPanel />
      <Stage>
        <TabStrip>
          {tabs.map(({ name, width, home, state, active }) => (
            <Tab key={name} $width={width} $active={active}>
              {home ? <HomeIcon /> : <VmIcon state={state} />}
              <span>{name}</span>
              <Cross />
            </Tab>
          ))}
          <TabArrows>
            <svg width="8" height="14" viewBox="0 0 8 14" fill="#b4b7ba"><path d="M8 0v14L0 7z" /></svg>
            <svg width="8" height="14" viewBox="0 0 8 14" fill="#333b44"><path d="M0 0v14l8-7z" /></svg>
          </TabArrows>
        </TabStrip>
        <Desktop>
          <DesktopIcons>
            <DesktopItem $size={20} $gap={6} $after={49}>
              <Art><RecycleBin /></Art>
              휴지통
            </DesktopItem>
            <DesktopItem $after={26}>
              <Art><Chrome size={74} /><Badge><Shortcut /></Badge></Art>
              <span>Google<br />Chrome</span>
            </DesktopItem>
            <DesktopItem>
              <Art><Firefox size={72} /><Badge><Shortcut /></Badge></Art>
              Firefox
            </DesktopItem>
          </DesktopIcons>
          <ExplorerWindow />
        </Desktop>
        <GuestTaskbar />
      </Stage>
    </Workspace>
    <StatusBar>
      <span>To direct input to this VM, move the mouse pointer inside or press Ctrl+G.</span>
      <StatusIcons>
        <DiskIcon />
        <DiscIcon />
        <AdapterIcon />
        <Separator $gap={1} />
        <NoteIcon />
        <svg width="20" height="20" viewBox="0 0 20 20" stroke="#8d9092" strokeWidth="2"><path d="M7 20L20 7M15 20l5-5" /></svg>
      </StatusIcons>
    </StatusBar>
  </Frame>
);

export default App;
